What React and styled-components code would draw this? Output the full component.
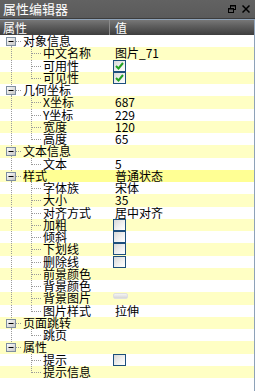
import React from "react";
import styled, { createGlobalStyle } from "styled-components";

const ROW_H = 12.25;

const groups = [
  {
    label: "对象信息",
    children: [
      ["中文名称", { text: "图片_71" }],
      ["可用性", { check: true }],
      ["可见性", { check: true }],
    ],
  },
  {
    label: "几何坐标",
    children: [
      ["X坐标", { text: "687" }],
      ["Y坐标", { text: "229" }],
      ["宽度", { text: "120" }],
      ["高度", { text: "65" }],
    ],
  },
  { label: "文本信息", children: [["文本", { text: "5" }]] },
  {
    label: "样式",
    value: { text: "普通状态" },
    selected: true,
    children: [
      ["字体族", { text: "宋体" }],
      ["大小", { text: "35" }],
      ["对齐方式", { text: "居中对齐" }],
      ["加粗", { check: false }],
      ["倾斜", { check: false }],
      ["下划线", { check: false }],
      ["删除线", { check: false }],
      ["前景颜色", {}],
      ["背景颜色", {}],
      ["背景图片", { button: true }],
      ["图片样式", { text: "拉伸" }],
    ],
  },
  { label: "页面跳转", children: [["跳页", {}]] },
  {
    label: "属性",
    children: [
      ["提示", { check: false }],
      ["提示信息", {}],
    ],
  },
];

const GlobalStyle = createGlobalStyle`
  body {
    margin: 0;
    background: #ffffff;
    font-family: "Noto Sans CJK SC", "DejaVu Sans", sans-serif;
  }
`;

const Panel = styled.div`
  width: 255px;
  height: 391px;
  display: flex;
  flex-direction: column;
  overflow: hidden;
  background: #ffffff;
`;

const TitleBar = styled.div`
  height: 18px;
  border-bottom: 1px solid #3c3c3c;
  background: linear-gradient(#626262, #5a5a5a);
  color: #ffffff;
  font-size: 13px;
  padding: 0 4px 0 3px;
  display: flex;
  align-items: center;
  justify-content: space-between;
`;

const TitleText = styled.div`
  line-height: 18px;
  height: 18px;
`;

const TitleButtons = styled.div`
  display: flex;
  gap: 6px;
  align-items: center;
  padding-right: 1px;
`;

const Body = styled.div`
  flex: 1;
  border-top: 1px solid #8ea2b8;
  border-right: 1px solid #8ea2b8;
  display: flex;
  flex-direction: column;
`;

const Header = styled.div`
  height: 15px;
  display: grid;
  grid-template-columns: 110px 1fr;
  background: linear-gradient(#777777 0%, #5e5e5e 40%, #3e3e3e 100%);
  color: #ffffff;
  font-size: 12px;
  line-height: 15px;
`;

const HeaderCell = styled.div`
  padding-left: ${(p) => p.$pad}px;
  border-right: ${(p) => (p.$divider ? "1px solid #8a8a8a" : "none")};
`;

const Row = styled.div`
  height: ${ROW_H}px;
  display: grid;
  grid-template-columns: 112px 1fr;
  background: ${(p) => (p.$odd ? "#ffffc4" : "#ffffff")};
  font-size: 12px;
  line-height: ${ROW_H}px;
  color: #000000;
`;

const TreeCell = styled.div`
  display: flex;
  height: ${ROW_H}px;
`;

const Label = styled.div`
  flex: 1;
  height: ${ROW_H}px;
  line-height: ${ROW_H}px;
  white-space: nowrap;
  background: ${(p) => (p.$selected ? "#ffff94" : "transparent")};
`;

const ValueCell = styled.div`
  display: flex;
  align-items: center;
  height: ${ROW_H}px;
  white-space: nowrap;
  background: ${(p) => (p.$selected ? "#ffff94" : "transparent")};
`;

const ValueText = styled.div`
  padding-left: 3px;
  height: ${ROW_H}px;
  line-height: ${ROW_H}px;
`;

const CheckBox = styled.span`
  width: 11px;
  height: 10px;
  margin-left: 1px;
  border: 1px solid #1d4f7c;
  background: linear-gradient(135deg, #d8d8d8 0%, #f2f2f2 60%, #ffffff 100%);
  display: flex;
  align-items: center;
  justify-content: center;
`;

const SmallButton = styled.span`
  width: 13px;
  height: 4px;
  margin-left: 1px;
  margin-bottom: 5px;
  border-radius: 2px;
  background: linear-gradient(#f4f4f4, #d6d6d6);
  border: 1px solid #e0e0e0;
`;

const RestoreIcon = () => (
  <svg width="8" height="8" viewBox="0 0 8 8">
    <rect x="2.5" y="0.5" width="5" height="4" fill="none" stroke="#000" />
    <line x1="2" y1="1" x2="8" y2="1" stroke="#000" strokeWidth="1" />
    <rect x="0.5" y="3.5" width="5" height="4" fill="#5c5c5c" stroke="#000" />
    <line x1="0" y1="4" x2="6" y2="4" stroke="#000" strokeWidth="1" />
  </svg>
);

const CloseIcon = () => (
  <svg width="8" height="8" viewBox="0 0 8 8">
    <path d="M0.5 0.5 L7.5 7.5 M7.5 0.5 L0.5 7.5" stroke="#000" strokeWidth="1.5" />
  </svg>
);

const Check = () => (
  <svg width="9" height="8" viewBox="0 0 9 8">
    <path d="M1 4 L3.5 6.5 L8 1" fill="none" stroke="#21a121" strokeWidth="2" />
  </svg>
);

const dot = { stroke: "#9a9a9a", strokeWidth: 1, strokeDasharray: "1 1" };

// tree guides for a group row (minus box + rail at x 11)
const GroupGuide = ({ first, last }) => (
  <svg width="23" height={ROW_H} style={{ flex: "none" }}>
    {!first && <line x1="11.5" y1="0" x2="11.5" y2="2" {...dot} />}
    {!last && <line x1="11.5" y1="11" x2="11.5" y2={ROW_H} {...dot} />}
    <line x1="16" y1="6.5" x2="22" y2="6.5" {...dot} />
    <defs>
      <linearGradient id="box" x1="0" y1="0" x2="1" y2="1">
        <stop offset="0" stopColor="#ffffff" />
        <stop offset="1" stopColor="#c4c4c4" />
      </linearGradient>
    </defs>
    <rect x="6.5" y="2.5" width="9" height="8" fill="url(#box)" stroke="#7f8fa0" />
    <line x1="8.5" y1="6.5" x2="13.5" y2="6.5" stroke="#000" />
  </svg>
);

const ChildGuide = ({ rail, lastChild }) => (
  <svg width="43" height={ROW_H} style={{ flex: "none" }}>
    {rail && <line x1="11.5" y1="0" x2="11.5" y2={ROW_H} {...dot} />}
    <line x1="31.5" y1="0" x2="31.5" y2={lastChild ? 7 : ROW_H} {...dot} />
    <line x1="32" y1="6.5" x2="42" y2="6.5" {...dot} />
  </svg>
);

const Value = ({ value }) => {
  if (!value) return null;
  if (value.check !== undefined)
    return <CheckBox>{value.check && <Check />}</CheckBox>;
  if (value.button) return <SmallButton />;
  if (value.text) return <ValueText>{value.text}</ValueText>;
  return null;
};

const App = () => {
  const rows = [];
  groups.forEach((g, gi) => {
    const lastGroup = gi === groups.length - 1;
    rows.push({
      key: g.label,
      guide: <GroupGuide first={gi === 0} last={lastGroup} />,
      label: g.label,
      value: g.value,
      selected: g.selected,
    });
    g.children.forEach(([label, value], ci) => {
      rows.push({
        key: g.label + label,
        guide: <ChildGuide rail={!lastGroup} lastChild={ci === g.children.length - 1} />,
        label,
        value,
      });
    });
  });

  return (
    <>
      <GlobalStyle />
      <Panel>
        <TitleBar>
          <TitleText>属性编辑器</TitleText>
          <TitleButtons>
            <RestoreIcon />
            <CloseIcon />
          </TitleButtons>
        </TitleBar>
        <Body>
          <Header>
            <HeaderCell $pad={3} $divider>
              属性
            </HeaderCell>
            <HeaderCell $pad={5}>值</HeaderCell>
          </Header>
          {rows.map((r, i) => (
            <Row key={r.key} $odd={i % 2 === 1}>
              <TreeCell>
                {r.guide}
                <Label $selected={r.selected}>{r.label}</Label>
              </TreeCell>
              <ValueCell $selected={r.selected}>
                <Value value={r.value} />
              </ValueCell>
            </Row>
          ))}
        </Body>
      </Panel>
    </>
  );
};

export default App;
